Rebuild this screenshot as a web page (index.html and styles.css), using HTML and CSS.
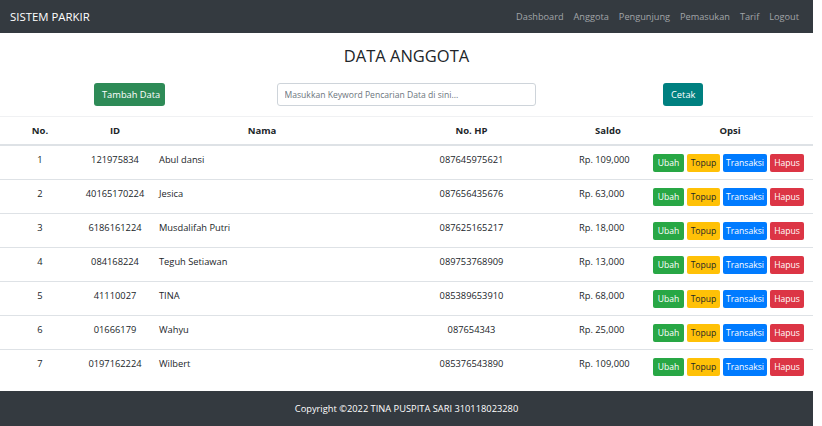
FILE: index.html
```html
<!DOCTYPE html>
<html lang="en">
<head>
    <meta charset="UTF-8">
    <title>Data Anggota - Sistem Parkir</title>
    <link rel="stylesheet" href="styles.css">
</head>
<body>
    <div class="page">
        <nav class="navbar">
            <a class="brand" href="#">SISTEM PARKIR</a>
            <div class="nav-links">
                <a href="#">Dashboard</a>
                <a href="#">Anggota</a>
                <a href="#">Pengunjung</a>
                <a href="#">Pemasukan</a>
                <a href="#">Tarif</a>
                <a href="#">Logout</a>
            </div>
        </nav>

        <h1 class="title">DATA ANGGOTA</h1>

        <div class="toolbar">
            <div class="tool-col"><button class="btn btn-add">Tambah Data</button></div>
            <div class="tool-col"><input class="search" type="text" placeholder="Masukkan Keyword Pencarian Data di sini..."></div>
            <div class="tool-col"><button class="btn btn-print">Cetak</button></div>
        </div>

        <table class="data-table">
            <thead>
                <tr>
                    <th class="col-no">No.</th>
                    <th class="col-id">ID</th>
                    <th class="col-nama">Nama</th>
                    <th class="col-hp">No. HP</th>
                    <th class="col-saldo">Saldo</th>
                    <th class="col-opsi">Opsi</th>
                </tr>
            </thead>
            <tbody id="rows"></tbody>
        </table>

        <footer class="footer">Copyright &copy;2022 TINA PUSPITA SARI 310118023280</footer>
    </div>

    <script>
        const anggota = [
            ["121975834", "Abul dansi", "087645975621", "109,000"],
            ["40165170224", "Jesica", "087656435676", "63,000"],
            ["6186161224", "Musdalifah Putri", "087625165217", "18,000"],
            ["084168224", "Teguh Setiawan", "089753768909", "13,000"],
            ["41110027", "TINA", "085389653910", "68,000"],
            ["01666179", "Wahyu", "087654343", "25,000"],
            ["0197162224", "Wilbert", "085376543890", "109,000"]
        ];

        const tbody = document.getElementById("rows");
        anggota.forEach((a, i) => {
            const tr = document.createElement("tr");
            tr.innerHTML = `
                <td class="col-no">${i + 1}</td>
                <td class="col-id">${a[0]}</td>
                <td class="col-nama">${a[1]}</td>
                <td class="col-hp">${a[2]}</td>
                <td class="col-saldo">Rp. ${a[3]}</td>
                <td class="col-opsi"><div class="actions">
                    <button class="btn-sm ubah">Ubah</button>
                    <button class="btn-sm topup">Topup</button>
                    <button class="btn-sm transaksi">Transaksi</button>
                    <button class="btn-sm hapus">Hapus</button>
                </div></td>`;
            tbody.appendChild(tr);
        });
    </script>
</body>
</html>
```

FILE: styles.css
```css
body {
    margin: 0;
    font-family: "Open Sans", Arial, sans-serif;
    color: #212529;
    background-color: white;
}
.page {
    width: 813px;
}
.navbar {
    height: 33px;
    background-color: #343a40;
    display: flex;
    align-items: center;
    justify-content: space-between;
    padding: 0 14px 0 10px;
}
.brand {
    color: white;
    text-decoration: none;
    font-size: 11.4px;
}
.nav-links {
    display: flex;
    gap: 10px;
}
.nav-links a {
    color: #a2a5a8;
    text-decoration: none;
    font-size: 9.2px;
}
.title {
    margin: 0;
    padding-top: 12px;
    height: 38px;
    text-align: center;
    font-size: 16.5px;
    font-weight: 400;
    line-height: 22px;
}
.toolbar {
    display: grid;
    grid-template-columns: 259px 294px 260px;
    height: 23px;
}
.tool-col {
    display: flex;
    justify-content: center;
}
.btn {
    border: none;
    border-radius: 3px;
    color: white;
    font-family: inherit;
    font-size: 9.3px;
    height: 23px;
    padding: 0 8px;
    white-space: nowrap;
    cursor: pointer;
}
.btn-add {
    background-color: #2e8b57;
    width: 71px;
}
.btn-print {
    background-color: #008080;
    width: 40px;
}
.search {
    box-sizing: border-box;
    width: 259px;
    height: 23px;
    border: 1px solid #ced4da;
    border-radius: 3px;
    padding: 0 7px;
    font-family: inherit;
    font-size: 8.6px;
}
.search::placeholder {
    color: #6c757d;
}
.data-table {
    margin-top: 10px;
    width: 813px;
    border-collapse: collapse;
    table-layout: fixed;
    font-size: 9.3px;
    line-height: 14px;
}
.data-table th {
    height: 26px;
    border-top: 1px solid #f0f1f3;
    border-bottom: 2px solid #dee2e6;
    font-size: 9.5px;
    font-weight: 700;
    text-align: center;
    padding: 1px 0 0;
}
.data-table td {
    height: 34px;
    border-bottom: 1px solid #dee2e6;
    padding: 0;
    text-align: center;
    vertical-align: top;
    padding-top: 7px;
    box-sizing: border-box;
}
.data-table tbody tr:last-child td {
    border-bottom: none;
}
.col-no { width: 80px; }
.col-id { width: 70px; }
.col-nama { width: 224px; }
.col-hp { width: 195px; }
.col-saldo { width: 78px; }
.col-opsi { width: 166px; }
.data-table td.col-nama {
    text-align: left;
    padding-left: 9px;
}
.data-table td.col-saldo {
    text-align: left;
    padding-left: 10px;
    white-space: nowrap;
}
.actions {
    display: flex;
    justify-content: center;
    gap: 3px;
    padding-right: 3px;
    padding-top: 1px;
}
.btn-sm {
    border: none;
    border-radius: 2px;
    height: 18px;
    padding: 0;
    font-family: inherit;
    font-size: 8.6px;
    color: white;
    white-space: nowrap;
    cursor: pointer;
}
.ubah { background-color: #28a745; width: 31px; }
.topup { background-color: #ffc107; color: #212529; width: 33px; }
.transaksi { background-color: #007bff; width: 44px; }
.hapus { background-color: #dc3545; width: 34px; }
.footer {
    margin-top: 8px;
    height: 35px;
    background-color: #343a40;
    color: white;
    font-size: 9.3px;
    display: flex;
    align-items: center;
    justify-content: center;
}
```
